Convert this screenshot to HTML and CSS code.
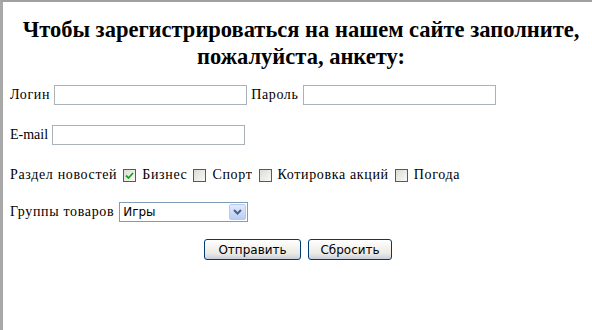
FILE: index.html
```html
<!DOCTYPE html>
<html lang="ru">
<head>
  <meta charset="UTF-8" />
  <title>Регистрация</title>
  <link rel="stylesheet" href="styles.css">
</head>
<body>
  <div class="frame">
    <h2 class="title">Чтобы зарегистрироваться на нашем сайте заполните,<br>пожалуйста, анкету:</h2>

    <form class="form" onsubmit="return false">
      <div class="row row-first">
        <span>Логин</span>
        <input class="field" type="text">
        <span>Пароль</span>
        <input class="field" type="password">
      </div>

      <div class="row">
        <span class="latin">E-mail</span>
        <input class="field" type="text">
      </div>

      <div class="row">
        <span>Раздел новостей</span>
        <span class="check checked">
          <svg width="9" height="9" viewBox="0 0 9 9"><path d="M1 4.5 L3.5 7 L8 2" fill="none" stroke="#21a121" stroke-width="1.8"/></svg>
        </span>
        <span>Бизнес</span>
        <span class="check"></span>
        <span>Спорт</span>
        <span class="check"></span>
        <span>Котировка акций</span>
        <span class="check"></span>
        <span>Погода</span>
      </div>

      <div class="row row-select">
        <span>Группы товаров</span>
        <div class="select">
          <span class="select-value">Игры</span>
          <span class="select-arrow">
            <svg width="9" height="6" viewBox="0 0 9 6"><path d="M1 1 L4.5 4.5 L8 1" fill="none" stroke="#4d6185" stroke-width="2"/></svg>
          </span>
        </div>
      </div>

      <div class="buttons">
        <button class="btn btn-send" type="submit">Отправить</button>
        <button class="btn btn-reset" type="reset">Сбросить</button>
      </div>
    </form>
  </div>
</body>
</html>
```

FILE: styles.css
```css
html, body {
  margin: 0;
  height: 100%;
}

body {
  background-color: #ffffff;
  font-family: "Liberation Serif", "Times New Roman", serif;
  font-size: 14px;
  letter-spacing: 0.65px;
  color: #000000;
}

.frame {
  height: 100%;
  box-sizing: border-box;
  border-top: 2px solid #a0a0a0;
  border-left: 3px solid #a8a8a8;
  padding: 0 0 0 7px;
}

.title {
  margin: 14px 0 0;
  font-size: 22.5px;
  line-height: 27px;
  letter-spacing: 0;
  text-align: center;
  font-weight: bold;
}

.form {
  margin: 0;
}

.row {
  display: flex;
  align-items: center;
  gap: 4px;
  height: 22px;
  margin-top: 18px;
}

.row-first {
  margin-top: 14px;
}

.row-select {
  margin-top: 15px;
}

.latin {
  letter-spacing: 0;
}

.field {
  width: 193px;
  height: 20px;
  box-sizing: border-box;
  border: 1px solid #a9b3bc;
  padding: 0 2px;
  margin: 0;
  font-size: 13px;
}

.check {
  display: inline-flex;
  align-items: center;
  justify-content: center;
  width: 13px;
  height: 13px;
  box-sizing: border-box;
  border: 1px solid #3a5f8a;
  background: linear-gradient(135deg, #dcdcd6, #f8f8f6);
  margin: 0 2px 0 2px;
}

.select {
  display: flex;
  width: 129px;
  height: 20px;
  box-sizing: border-box;
  border: 1px solid #7f9db9;
  font-family: Tahoma, "DejaVu Sans", sans-serif;
  font-size: 12px;
  letter-spacing: 0;
  margin-left: 1px;
}

.select-value {
  flex-grow: 1;
  padding-left: 3px;
  line-height: 18px;
}

.select-arrow {
  width: 15px;
  margin: 1px;
  display: flex;
  align-items: center;
  justify-content: center;
  border: 1px solid #b7cbef;
  border-radius: 2px;
  background: linear-gradient(#e2ebfd, #b9cdf4);
}

.buttons {
  display: flex;
  justify-content: center;
  gap: 7px;
  margin-top: 16px;
  padding-right: 6px;
}

.btn {
  height: 21px;
  box-sizing: border-box;
  border: 1px solid #003c74;
  border-radius: 3px;
  background: linear-gradient(#ffffff, #eceae4 70%, #c9cfdc);
  font-family: Tahoma, "DejaVu Sans", sans-serif;
  font-size: 12px;
  letter-spacing: 0;
  color: #000000;
  padding: 0;
  margin: 0;
}

.btn-send {
  width: 97px;
}

.btn-reset {
  width: 84px;
}
```
